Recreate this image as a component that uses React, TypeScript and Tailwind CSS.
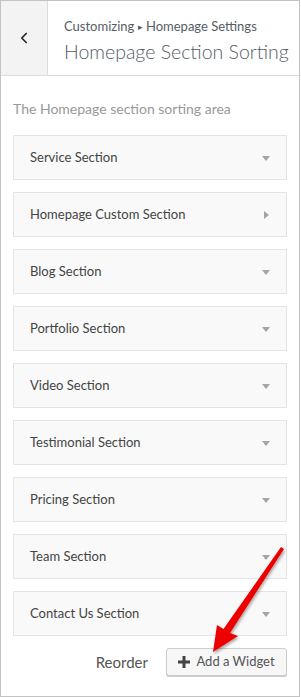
import { ChevronLeft } from 'lucide-react';

const sections = [
  { name: 'Service Section', open: true },
  { name: 'Homepage Custom Section', open: false },
  { name: 'Blog Section', open: true },
  { name: 'Portfolio Section', open: true },
  { name: 'Video Section', open: true },
  { name: 'Testimonial Section', open: true },
  { name: 'Pricing Section', open: true },
  { name: 'Team Section', open: true },
  { name: 'Contact Us Section', open: true },
];

function Caret({ open }: { open: boolean }) {
  return (
    <svg width="10" height="10" viewBox="0 0 10 10" className="shrink-0">
      {open ? (
        <polygon points="1,3 9,3 5,8" fill="#a0a5aa" />
      ) : (
        <polygon points="3,1 8,5 3,9" fill="#a0a5aa" />
      )}
    </svg>
  );
}

export default function App() {
  return (
    <div className="relative w-[300px] h-[697px] bg-white border border-[#c3c3c3] font-['Lato','Liberation_Sans',sans-serif] overflow-hidden">
      {/* header */}
      <div className="flex h-[75px] border-b border-[#dcdcde]">
        <button className="w-[47px] flex items-center justify-center bg-[#f3f3f3] border-r border-[#dcdcde] text-[#23282d]">
          <ChevronLeft size={18} strokeWidth={2.25} />
        </button>
        <div className="flex-1 pl-[16px] pt-[16px]">
          <div className="text-[13px] leading-[18px] text-[#555d66]">
            Customizing <span className="text-[9px] relative -top-[1px]">▸</span> Homepage Settings
          </div>
          <div className="text-[19.5px] leading-[28px] font-light text-[#555d66] mt-[1px] whitespace-nowrap">
            Homepage Section Sorting
          </div>
        </div>
      </div>

      <div className="px-[12px]">
        <p className="mt-[24px] text-[14px] leading-[18px] text-[#999]">The Homepage section sorting area</p>

        <div className="mt-[17px] flex flex-col gap-[12px]">
          {sections.map((s) => (
            <div
              key={s.name}
              className="h-[45px] flex items-center justify-between pl-[16px] pr-[15px] bg-[#f9f9f9] border border-[#e2e4e7]"
            >
              <span className="text-[13px] text-[#444]">{s.name}</span>
              <Caret open={s.open} />
            </div>
          ))}
        </div>

        <div className="mt-[12px] flex items-center justify-end gap-[18px]">
          <span className="text-[15px] text-[#555]">Reorder</span>
          <button className="h-[28px] w-[121px] flex items-center justify-center gap-[6px] rounded-[3px] border border-[#ccc] bg-[#f7f7f7] shadow-[0_1px_0_#ccc] text-[13px] text-[#555]">
            <svg width="12" height="12" viewBox="0 0 12 12">
              <rect x="4.5" y="0" width="3" height="12" fill="#444" />
              <rect x="0" y="4.5" width="12" height="3" fill="#444" />
            </svg>
            Add a Widget
          </button>
        </div>
      </div>

      {/* annotation arrow */}
      <svg className="absolute left-0 top-0 pointer-events-none" width="300" height="697">
        <defs>
          <filter id="sh" x="-20%" y="-20%" width="140%" height="140%">
            <feDropShadow dx="1" dy="2" stdDeviation="1.5" floodColor="#000" floodOpacity="0.35" />
          </filter>
        </defs>
        <polygon
          filter="url(#sh)"
          points="280,546 283,548 229,632 237,635 212,651 216,624 222.5,628"
          fill="#ee0000"
        />
      </svg>
    </div>
  );
}
